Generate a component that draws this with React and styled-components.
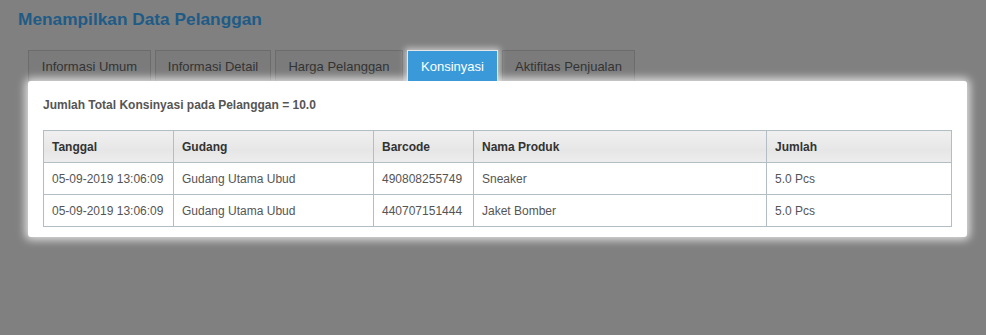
import React from 'react';
import styled, { createGlobalStyle } from 'styled-components';

const GlobalStyle = createGlobalStyle`
  html, body {
    margin: 0;
    padding: 0;
    background: #808080;
    font-family: 'Liberation Sans', Arial, sans-serif;
  }
`;

const Page = styled.div`
  padding: 9px 19px 0 18px;
  height: 326px;
`;

const Title = styled.h1`
  margin: 0;
  font-size: 17.3px;
  line-height: 20px;
  font-weight: 700;
  color: #1e5b86;
`;

const Tabs = styled.div`
  display: flex;
  gap: 4px;
  margin: 21px 0 0 10px;
  height: 30px;
`;

const Tab = styled.div`
  box-sizing: border-box;
  width: ${(p) => p.$w}px;
  height: 31px;
  display: flex;
  align-items: center;
  justify-content: center;
  font-size: 13px;
  color: ${(p) => (p.$active ? '#fff' : '#333')};
  background: ${(p) => (p.$active ? '#3a9ad9' : '#7b7b7b')};
  border: 1px solid ${(p) => (p.$active ? '#e6e6e6' : '#6c6c6c')};
  border-bottom: none;
  position: relative;
  z-index: ${(p) => (p.$active ? 2 : 0)};
  box-shadow: ${(p) => (p.$active ? '0 0 6px 2px rgba(255,255,255,0.55)' : 'none')};
`;

const Panel = styled.div`
  margin: 1px 0 0 10px;
  background: #fff;
  border-radius: 3px;
  padding: 16px 16px 10px 15px;
  box-shadow: 0 0 8px 3px rgba(255, 255, 255, 0.75);
  position: relative;
  z-index: 1;
`;

const Summary = styled.div`
  font-size: 12px;
  line-height: 16px;
  font-weight: 700;
  color: #555;
  margin-bottom: 17px;
`;

const Table = styled.table`
  border-collapse: collapse;
  width: 908px;
  table-layout: fixed;
  font-size: 12px;
  border: 1px solid #b3bec4;
`;

const Th = styled.th`
  height: 31px;
  padding: 0 8px;
  text-align: left;
  font-weight: 700;
  color: #333;
  border: 1px solid #b3bec4;
  background: linear-gradient(#f0f0f0, #e6e6e6 60%, #ededed);
`;

const Td = styled.td`
  height: 31px;
  padding: 0 8px;
  color: #555;
  border: 1px solid #b3bec4;
`;

const tabs = [
  { label: 'Informasi Umum', width: 123 },
  { label: 'Informasi Detail', width: 116 },
  { label: 'Harga Pelanggan', width: 128 },
  { label: 'Konsinyasi', width: 91 },
  { label: 'Aktifitas Penjualan', width: 133 },
];

const columns = [
  { label: 'Tanggal', width: 130 },
  { label: 'Gudang', width: 200 },
  { label: 'Barcode', width: 100 },
  { label: 'Nama Produk', width: 293 },
  { label: 'Jumlah', width: 185 },
];

const rows = [
  ['05-09-2019 13:06:09', 'Gudang Utama Ubud', '490808255749', 'Sneaker', '5.0 Pcs'],
  ['05-09-2019 13:06:09', 'Gudang Utama Ubud', '440707151444', 'Jaket Bomber', '5.0 Pcs'],
];

export default function App() {
  return (
    <Page>
      <GlobalStyle />
      <Title>Menampilkan Data Pelanggan</Title>
      <Tabs>
        {tabs.map((t) => (
          <Tab key={t.label} $w={t.width} $active={t.label === 'Konsinyasi'}>{t.label}</Tab>
        ))}
      </Tabs>
      <Panel>
        <Summary>Jumlah Total Konsinyasi pada Pelanggan = 10.0</Summary>
        <Table>
          <colgroup>
            {columns.map((c) => (
              <col key={c.label} style={{ width: c.width }} />
            ))}
          </colgroup>
          <thead>
            <tr>
              {columns.map((c) => (
                <Th key={c.label}>{c.label}</Th>
              ))}
            </tr>
          </thead>
          <tbody>
            {rows.map((r, i) => (
              <tr key={i}>
                {r.map((v, j) => (
                  <Td key={j}>{v}</Td>
                ))}
              </tr>
            ))}
          </tbody>
        </Table>
      </Panel>
    </Page>
  );
}
